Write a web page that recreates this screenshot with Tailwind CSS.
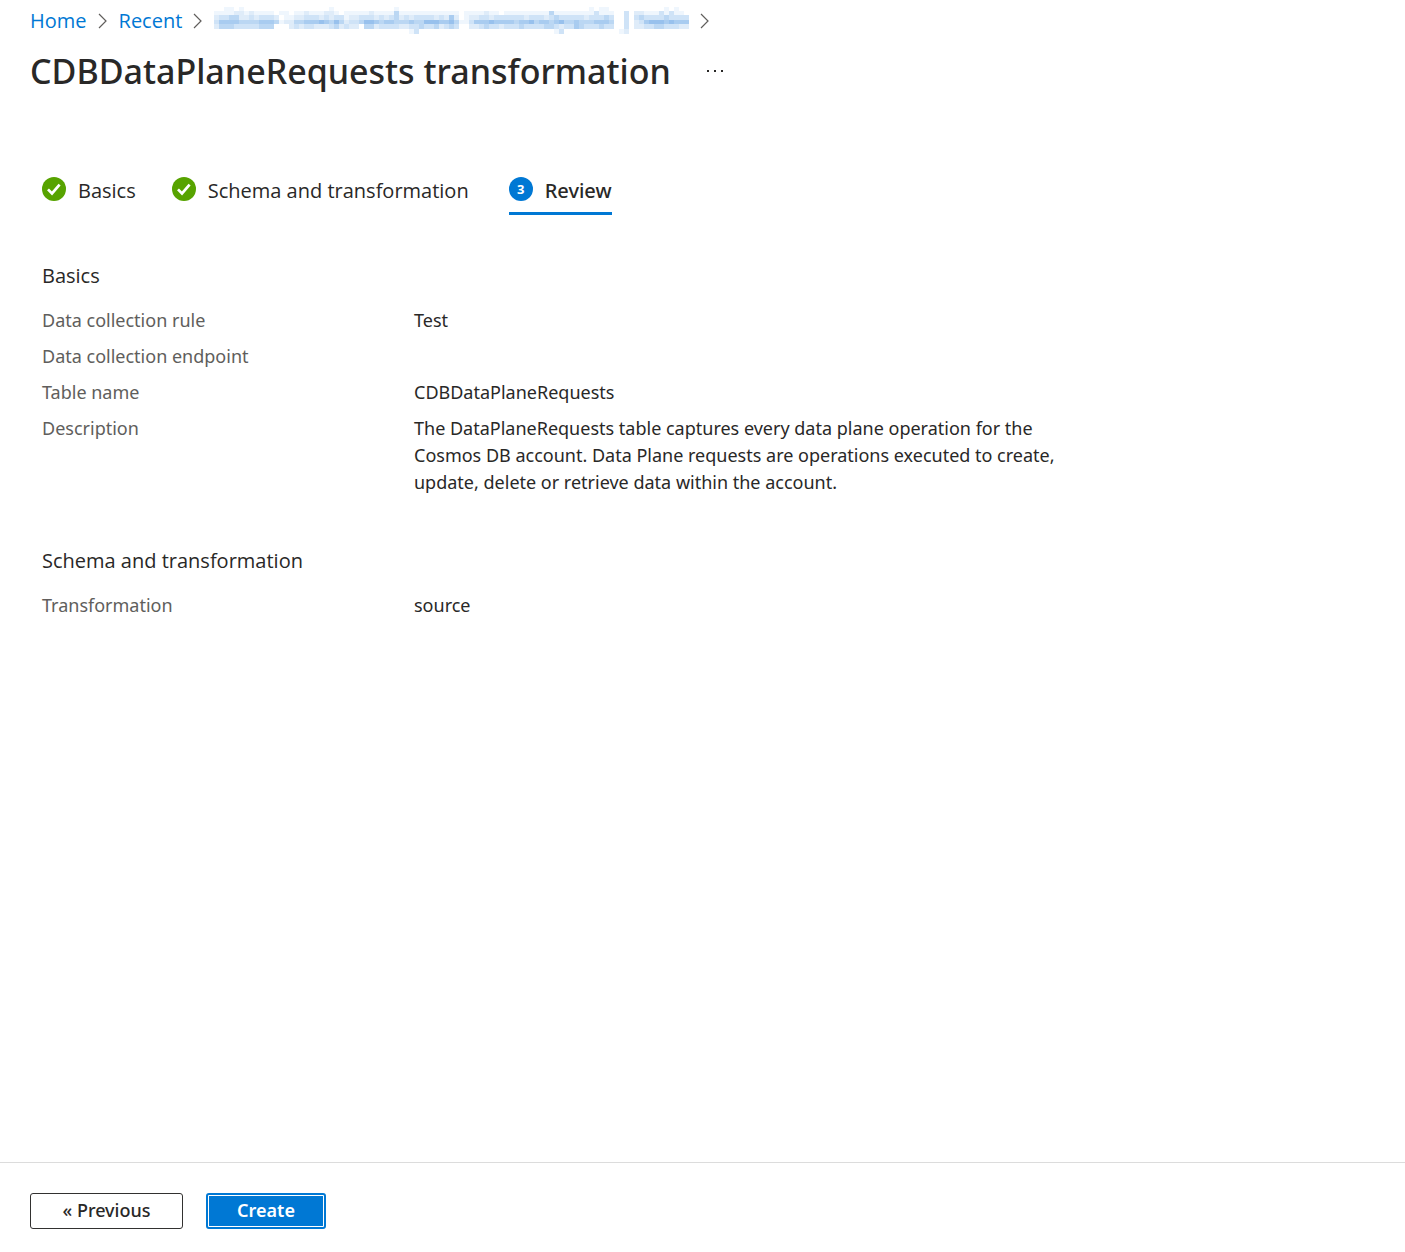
<!DOCTYPE html>
<html lang="en">
<head>
<meta charset="utf-8">
<meta name="viewport" content="width=device-width, initial-scale=1">
<title>CDBDataPlaneRequests transformation</title>
<script src="https://cdn.jsdelivr.net/npm/@tailwindcss/browser@4"></script>
</head>
<body class="flex min-h-screen flex-col bg-white font-['Segoe_UI','Noto_Sans',sans-serif] text-[18px] leading-[27px] text-[#292827]">
<header class="px-[30px]">
  <nav aria-label="Breadcrumb" class="flex h-[41px] items-center text-[20px] text-[#0078d4]">
    <a href="#" class="font-['Segoe_UI','Open_Sans',sans-serif]">Home</a>
    <svg class="mr-3 ml-[11px] h-4 w-[9px] shrink-0" viewBox="0 0 9 16" fill="none" stroke="#605e5c" stroke-width="1.2" aria-hidden="true"><path d="M1 1l7 7-7 7"/></svg>
    <a href="#" class="font-['Segoe_UI','Open_Sans',sans-serif]">Recent</a>
    <svg class="mr-3 ml-[11px] h-4 w-[9px] shrink-0" viewBox="0 0 9 16" fill="none" stroke="#605e5c" stroke-width="1.2" aria-hidden="true"><path d="M1 1l7 7-7 7"/></svg>
    <a href="#" aria-label="Hidden workspace name"><svg id="mosaic" class="h-[27px] w-[475px]" viewBox="0 0 475 27" shape-rendering="crispEdges"></svg></a>
    <svg class="mr-3 ml-[11px] h-4 w-[9px] shrink-0" viewBox="0 0 9 16" fill="none" stroke="#605e5c" stroke-width="1.2" aria-hidden="true"><path d="M1 1l7 7-7 7"/></svg>
  </nav>
  <div class="flex h-[60px] items-center gap-9">
    <h1 class="text-[34px] font-medium whitespace-nowrap">CDBDataPlaneRequests transformation</h1>
    <button type="button" aria-label="More options" class="flex h-6 items-center gap-[5px]">
      <span class="size-[2px] bg-[#292827]"></span><span class="size-[2px] bg-[#292827]"></span><span class="size-[2px] bg-[#292827]"></span>
    </button>
  </div>
</header>
<main class="grow px-[42px] pt-[68px]">
  <div role="tablist" class="flex text-[20px]">
    <button type="button" role="tab" aria-selected="false" class="mr-9 flex h-[46px] items-start gap-3 font-['Segoe_UI','Open_Sans',sans-serif]">
      <svg class="mt-2 size-6" viewBox="0 0 24 24" aria-hidden="true"><circle cx="12" cy="12" r="12" fill="#57a300"/><path d="M6 12.4l4 4.1 7.6-8.9" fill="none" stroke="#fff" stroke-width="2.7"/></svg>
      <span class="mt-2">Basics</span>
    </button>
    <button type="button" role="tab" aria-selected="false" class="mr-10 flex h-[46px] items-start gap-3 font-['Segoe_UI','Open_Sans',sans-serif]">
      <svg class="mt-2 size-6" viewBox="0 0 24 24" aria-hidden="true"><circle cx="12" cy="12" r="12" fill="#57a300"/><path d="M6 12.4l4 4.1 7.6-8.9" fill="none" stroke="#fff" stroke-width="2.7"/></svg>
      <span class="mt-2">Schema and transformation</span>
    </button>
    <button type="button" role="tab" aria-selected="true" class="flex h-[46px] items-start gap-3 border-b-[3px] border-[#0078d4] font-medium">
      <span class="mt-2 flex size-6 items-center justify-center rounded-full bg-[#0078d4] text-[13px] font-bold text-white">3</span>
      <span class="mt-2">Review</span>
    </button>
  </div>
  <section class="mt-[47px]">
    <h2 class="font-['Segoe_UI','Open_Sans',sans-serif] text-[20px]">Basics</h2>
    <dl class="mt-[18px] grid grid-cols-[372px_minmax(0,660px)] gap-y-[9px]">
      <dt class="text-[#605e5c]">Data collection rule</dt><dd>Test</dd>
      <dt class="text-[#605e5c]">Data collection endpoint</dt><dd></dd>
      <dt class="text-[#605e5c]">Table name</dt><dd>CDBDataPlaneRequests</dd>
      <dt class="text-[#605e5c]">Description</dt><dd>The DataPlaneRequests table captures every data plane operation for the Cosmos DB account. Data Plane requests are operations executed to create, update, delete or retrieve data within the account.</dd>
    </dl>
  </section>
  <section class="mt-[51px]">
    <h2 class="font-['Segoe_UI','Open_Sans',sans-serif] text-[20px]">Schema and transformation</h2>
    <dl class="mt-[18px] grid grid-cols-[372px_minmax(0,660px)] gap-y-[9px]">
      <dt class="text-[#605e5c]">Transformation</dt><dd>source</dd>
    </dl>
  </section>
</main>
<footer class="flex gap-[23px] border-t border-[#dcdcdc] px-[30px] pt-[30px] pb-[23px]">
  <button type="button" class="h-9 w-[153px] rounded-[3px] border border-[#323130] pb-[2px] font-medium">« Previous</button>
  <button type="button" class="h-9 w-[120px] rounded-[3px] border-2 border-[#0078d4] bg-white p-px font-semibold text-white"><span class="block h-full bg-[#0078d4] leading-[28px]">Create</span></button>
</footer>
<script>
  // One digit per mosaic cell, 0 (white) to 7 (deepest blue); one string per row.
  const rows = [
    '00110100000000000000000100000000000010000000000000000000000000000000000000010110000000000010100',
    '11112212111101101121112210111112111141111111111110111121101111111114111111113111003022111313110',
    '23344223233320112233323233122333232342323333232520122332333333233323433333233343003034333343333',
    '35555444455541224455565464233466545544454466655641135556555545564554564454445554003023566656555',
    '24443333344400023233222342322044233332233433423430022343323334333344323354333433003022334433322',
    '00000000000000000000000000000000000000013000000000000000000000000000130000000000012000000000000'
  ];
  const shades = ['#ffffff', '#eff6fd', '#dfecf9', '#cfe3f7', '#bbd7f3', '#a9ccf0', '#98c1ed', '#86b6e9'];
  const edges = [0, 4, 8, 13, 17, 22, 27];
  let cells = '';
  rows.forEach((row, y) => [...row].forEach((n, x) => {
    if (n !== '0') cells += `<rect x="${x * 5}" y="${edges[y]}" width="5" height="${edges[y + 1] - edges[y]}" fill="${shades[n]}"/>`;
  }));
  document.getElementById('mosaic').innerHTML = cells;
</script>
</body>
</html>
